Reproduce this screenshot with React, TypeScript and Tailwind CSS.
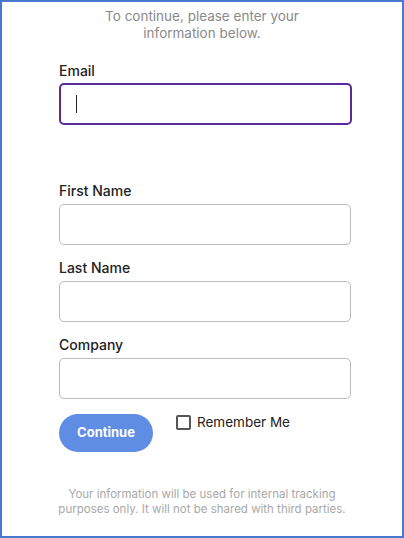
import React from "react";

function Field({ label, focused, className }: { label: string; focused?: boolean; className?: string }) {
  return (
    <div className={className}>
      <label className="block text-[14px] font-medium leading-[17px] text-[#222]">{label}</label>
      <div
        className={
          focused
            ? "mt-[4px] flex h-[42px] w-[293px] items-center rounded-[5px] border-2 border-[#5a2a9c] pl-[15px]"
            : "mt-[5px] h-[41px] w-[292px] rounded-[5px] border border-[#bcbcbc]"
        }
      >
        {focused && <span className="block h-[18px] w-px bg-[#222]" />}
      </div>
    </div>
  );
}

export default function App() {
  return (
    <div
      className="flex h-[538px] w-[404px] flex-col border-2 border-[#4a78d0] bg-white"
      style={{ fontFamily: "Inter, 'Noto Sans', sans-serif" }}
    >
      <p className="mt-[6px] text-center text-[13.5px] leading-[17px] text-[#8a8a8a]">
        To continue, please enter your
        <br />
        information below.
      </p>
      <div className="flex flex-col pl-[57px]">
        <Field label="Email" focused className="mt-[20px]" />
        <Field label="First Name" className="mt-[57px]" />
        <Field label="Last Name" className="mt-[14px]" />
        <Field label="Company" className="mt-[14px]" />
        <div className="mt-[15px] flex items-start">
          <button className="h-[38px] w-[94px] rounded-full bg-[#5f8de3] text-[13px] font-bold text-white">
            Continue
          </button>
          <label className="ml-[23px] flex items-center gap-[6px] text-[13.5px] leading-[17px] text-[#222]">
            <span className="block h-[15px] w-[15px] rounded-[2px] border-2 border-[#555]" />
            Remember Me
          </label>
        </div>
      </div>
      <p className="mt-[35px] text-center text-[11.5px] leading-[15px] text-[#a8a8a8]">
        Your information will be used for internal tracking
        <br />
        purposes only. It will not be shared with third parties.
      </p>
    </div>
  );
}
